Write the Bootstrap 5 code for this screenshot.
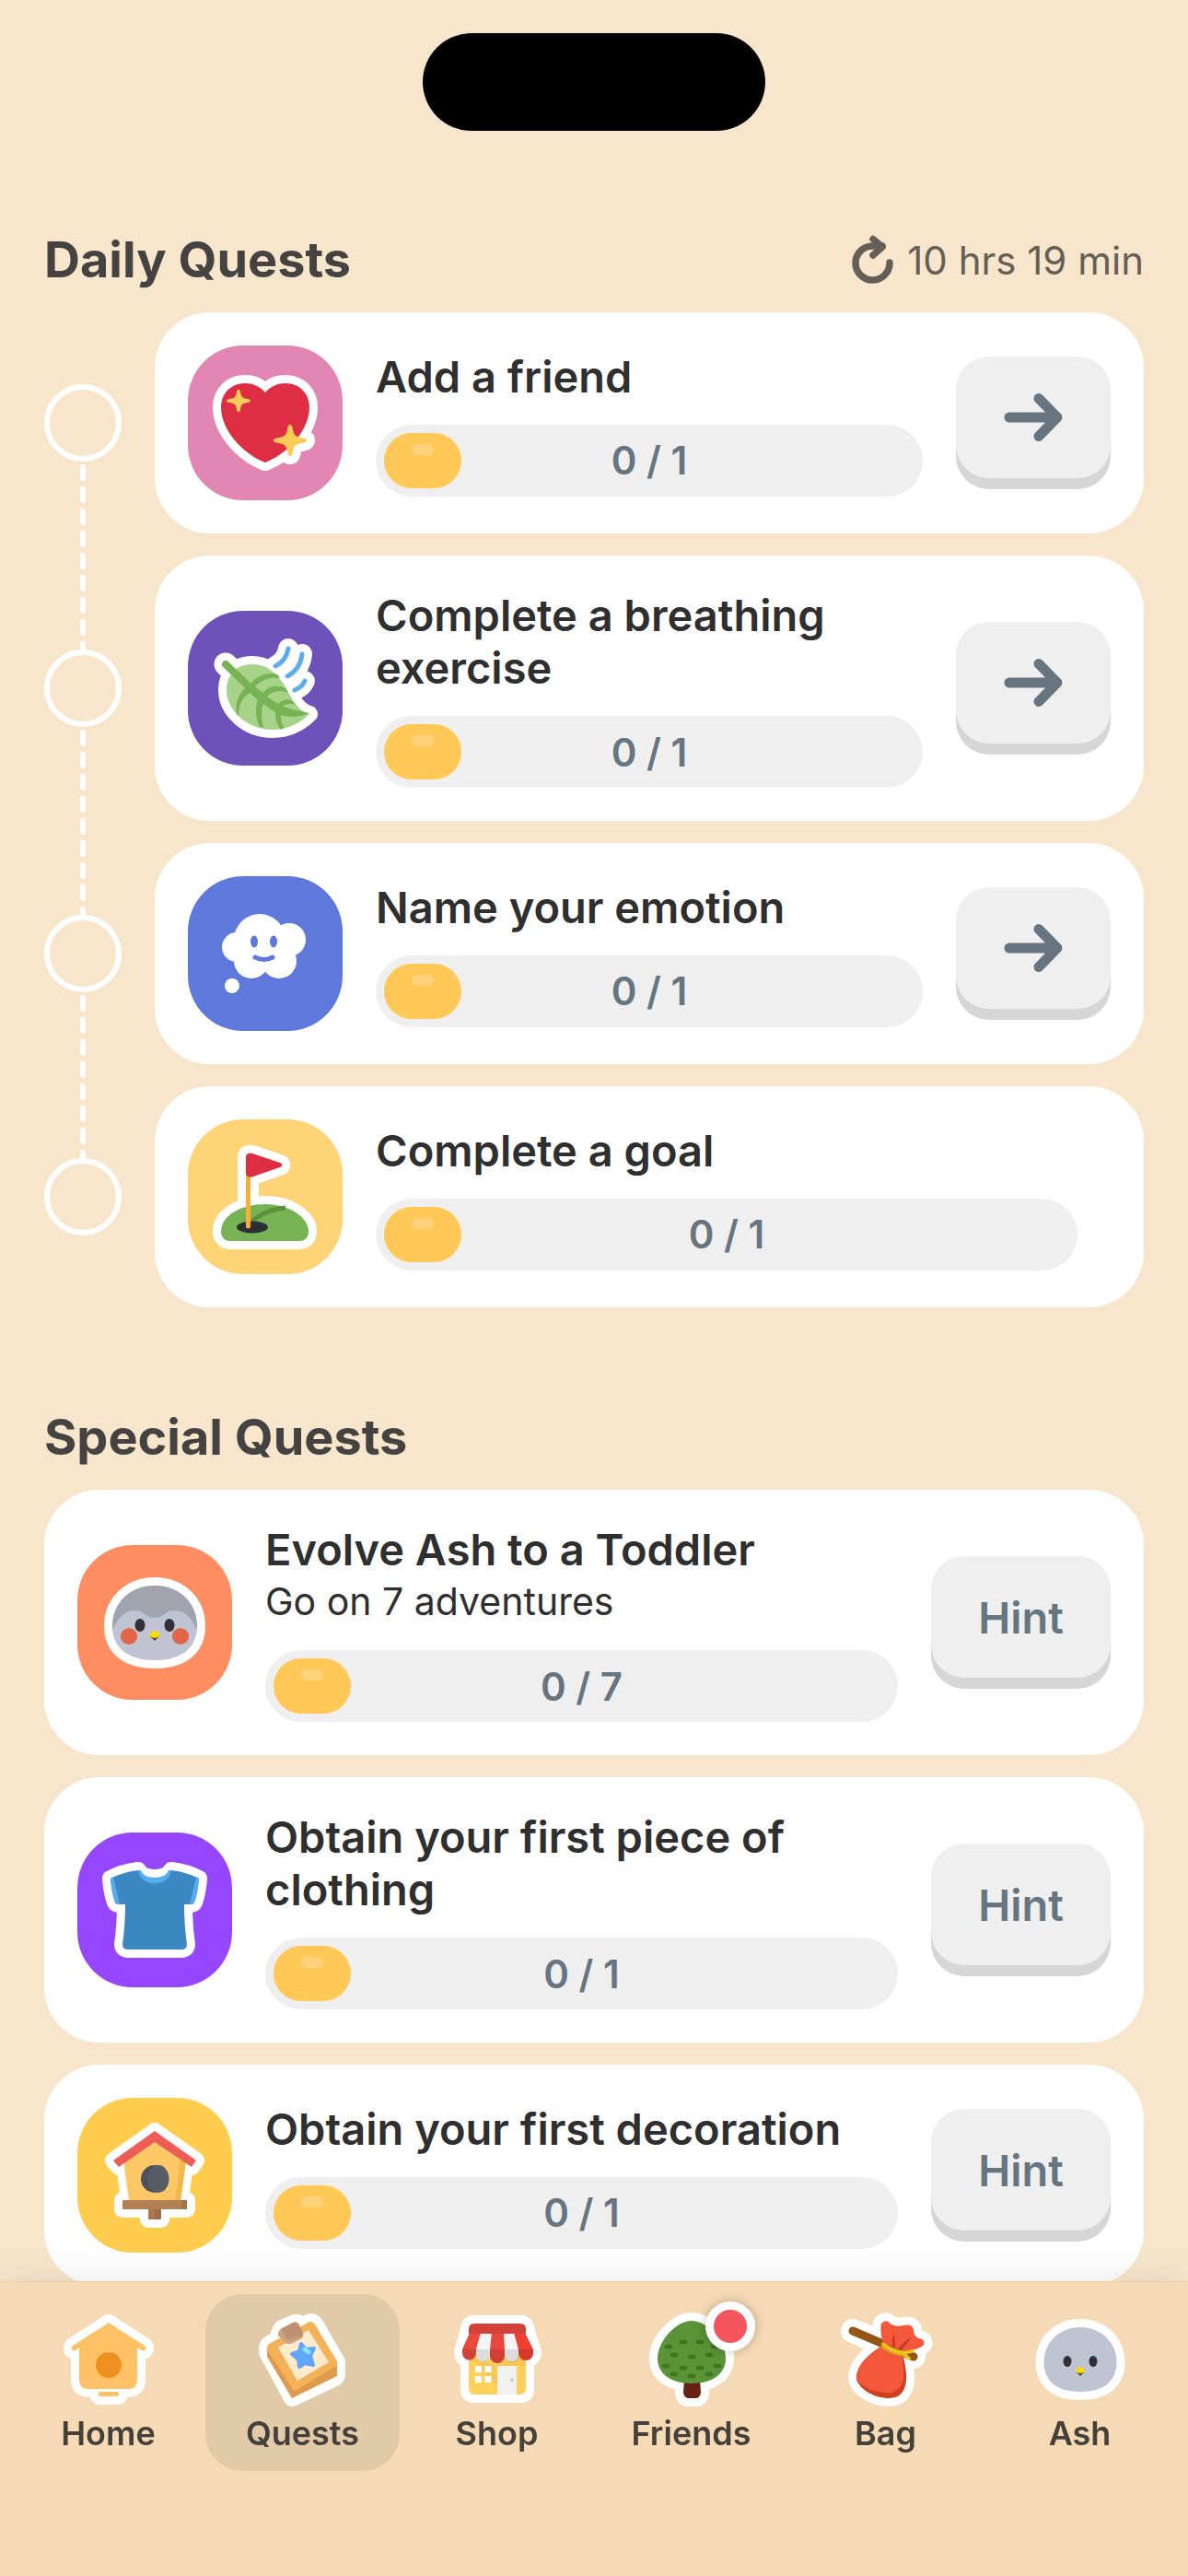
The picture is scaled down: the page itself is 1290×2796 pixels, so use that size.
<!DOCTYPE html>
<html lang="en">
<head>
  <meta charset="UTF-8">
  <meta name="viewport" content="width=device-width, initial-scale=1.0">
  <title>Quests</title>
  <link href="https://cdn.jsdelivr.net/npm/bootstrap@5.3.3/dist/css/bootstrap.min.css" rel="stylesheet">
  <script src="https://cdn.jsdelivr.net/npm/bootstrap@5.3.3/dist/js/bootstrap.bundle.min.js"></script>
  <style>
    body {
      background: #f8e6cc;
      color: #2f2f2f;
      font-family: Inter, Roboto, "Liberation Sans", sans-serif;
      font-size: 47px;
      font-weight: 600;
      line-height: 57px;
    }
    svg { display: block; flex-shrink: 0; }

    .island { width: 372px; height: 106px; margin-top: 36px; }
    .page { padding: 107px 48px 300px; }
    .section-title { font-size: 54px; font-weight: 700; line-height: 66px; color: #454341; }
    .section-head { margin-bottom: 24px; }
    .section-gap { margin-top: 108px; }
    .timer { font-size: 42px; font-weight: 400; color: #665f57; gap: 14px; }

    /* quest list */
    .quest-list { gap: 24px; }
    .quest-row { gap: 36px; }
    .quest { background: #fff; border-radius: 60px; padding: 36px; gap: 36px; }
    .quest-body { min-width: 0; }
    .quest-art { border-radius: 60px; }
    .art-pink { background: #e286b3; }
    .art-indigo { background: #6e52b9; }
    .art-blue { background: #5f78dc; }
    .art-sand { background: #ffd477; }
    .art-coral { background: #ff8d62; }
    .art-violet { background: #9746ff; }
    .art-yellow { background: #ffcc4d; }
    .quest-sub { font-size: 41px; font-weight: 400; }
    .no-action { margin-right: 36px; }

    /* dotted rail on the left, the lower part reaches over the gap between rows */
    .rail { width: 84px; }
    .rail svg { width: 84px; height: 0; flex: 1 1 0; overflow: visible; }
    .rail .rail-down { margin-bottom: -24px; flex-basis: 24px; }
    .rail line { stroke: #fff; stroke-width: 6; stroke-linecap: round; stroke-dasharray: 12 12; }
    .step { width: 84px; height: 84px; border: 6px solid #fff; flex-shrink: 0; }

    .meter { display: grid; align-items: center; height: 78px; margin-top: 24px; border-radius: 39px; background: #efefef; }
    .meter > * { grid-area: 1 / 1; }
    .meter-fill { width: 84px; height: 60px; margin-left: 9px; padding-top: 12px; border-radius: 30px; background: #ffc857; }
    .meter-fill::before { content: ""; display: block; width: 24px; height: 12px; margin: 0 auto; border-radius: 6px; background: #ffd37b; }
    .meter-text { font-size: 42px; color: #667580; text-align: center; }

    .key { width: 168px; height: 132px; margin-bottom: 12px; border: 0; border-radius: 36px; background: #efefef; box-shadow: 0 12px 0 #d6d6d6; color: #667580; flex-shrink: 0; }
    .key:hover, .key:active { background: #e8e8e8; }
    .key-hint { width: 195px; font-size: 47px; font-weight: 600; line-height: 57px; padding: 0; }

    /* bottom tabs */
    .tabs { background: #f5dab5; border-top: 1px solid #edcda1; padding: 13px 12px 114px; box-shadow: 0 -6px 36px rgba(0, 0, 0, .08); }
    .tab { flex: 1 1 0; padding: 18px 0 16px; border-radius: 40px; color: #44413b; font-size: 36px; line-height: 50px; text-decoration: none; }
    .tab.active { background: #e0caa8; }
    .dot { top: -10px; left: 69px; width: 54px; height: 54px; border: 9px solid #fff; background: #f4555f; box-shadow: 0 0 12px rgba(0, 0, 0, .25); }

    /* white sticker outline under each drawing */
    .edge { fill: #fff; stroke: #fff; stroke-width: 18; stroke-linejoin: round; stroke-linecap: round; }
    .ln { fill: none; stroke-linecap: round; stroke-linejoin: round; }
  </style>
</head>
<body>
  <div class="island bg-black rounded-pill mx-auto"></div>

  <main class="page">
    <section>
      <div class="section-head d-flex justify-content-between align-items-center">
        <h2 class="section-title mb-0">Daily Quests</h2>
        <div class="timer d-flex align-items-center">
          <svg width="46" height="54" viewBox="0 0 46 54" class="ln" stroke="#665f57" stroke-width="7.5">
            <path d="M41 30A18.500 18.500 0 1 1 22.500 12H33"/>
            <path d="M23 4.500L33 13L23 22"/>
          </svg>
          <span>10 hrs 19 min</span>
        </div>
      </div>

      <div class="quest-list d-flex flex-column">
        <div class="quest-row d-flex">
          <div class="rail d-flex flex-column">
            <svg></svg>
            <div class="step rounded-circle"></div>
            <svg class="rail-down"><line x1="42" y1="6" x2="42" y2="100%"/></svg>
          </div>
          <article class="quest d-flex align-items-center flex-grow-1">
            <svg class="quest-art art-pink" width="168" height="168" viewBox="0 0 168 168">
              <defs>
                <path id="heart" d="M84 51C78 44 70 41 62 41C47 41 36 52 36 67C36 92 60 118 84 127C108 118 132 92 132 67C132 52 121 41 106 41C98 41 90 44 84 51Z"/>
                <path id="spark" d="M0-17C2-17 2.500-15 3-12C4-6 6-4 12-3C15-2.500 18-2 18 0C18 2 15 2.500 12 3C6 4 4 6 3 12C2.500 15 2 17 0 17C-2 17-2.500 15-3 12C-4 6-6 4-12 3C-15 2.500-18 2-18 0C-18-2-15-2.500-12-3C-6-4-4-6-3-12C-2.500-15-2-17 0-17Z"/>
              </defs>
              <g class="edge"><use href="#heart"/><use href="#spark" x="111" y="103"/></g>
              <use href="#heart" fill="#dd2e44"/>
              <use href="#spark" x="111" y="103" fill="#fdcb58"/>
              <use href="#spark" transform="translate(55 60) scale(.72)" fill="#fdcb58"/>
            </svg>
            <div class="quest-body flex-grow-1">
              <div>Add a friend</div>
              <div class="meter" role="progressbar" aria-label="Add a friend" aria-valuenow="0" aria-valuemin="0" aria-valuemax="1">
                <div class="meter-fill"></div>
                <div class="meter-text">0 / 1</div>
              </div>
            </div>
            <button type="button" class="key d-flex justify-content-center align-items-center" aria-label="Go to Add a friend">
              <svg width="66" height="54" viewBox="0 0 66 54" class="ln" stroke="#667580" stroke-width="11"><path d="M7 27H59M39 6.500L59 27L39 47.500"/></svg>
            </button>
          </article>
        </div>

        <div class="quest-row d-flex">
          <div class="rail d-flex flex-column">
            <svg><line x1="42" y1="0" x2="42" y2="100%"/></svg>
            <div class="step rounded-circle"></div>
            <svg class="rail-down"><line x1="42" y1="6" x2="42" y2="100%"/></svg>
          </div>
          <article class="quest d-flex align-items-center flex-grow-1">
            <svg class="quest-art art-indigo" width="168" height="168" viewBox="0 0 168 168">
              <defs>
                <path id="leaf" d="M42 86C42 68 54 58 70 58C86 58 97 68 105 81C112 93 118 108 132 112C122 122 108 129 92 129C64 129 42 108 42 86Z"/>
                <path id="wind" d="M109 41Q107 54 95 60M124 47Q122 64 108 71M127 76Q124 83 116 86"/>
              </defs>
              <g class="edge"><use href="#leaf"/><path d="M41 58L66 82" stroke-width="25"/><use href="#wind" stroke-width="22"/></g>
              <path class="ln" d="M109 41Q107 54 95 60M124 47Q122 64 108 71M127 76Q124 83 116 86" stroke="#5dadec" stroke-width="5"/>
              <use href="#leaf" fill="#a6d388"/>
              <path class="ln" d="M41 58L66 82" stroke="#77b255" stroke-width="8"/>
              <path fill="#77b255" d="M62 84L69 78C77 70 87 66 97 69C99 70 100 73 99 73C89 71 79 76 73 82L81 89C88 81 98 80 106 84L109 89C100 85 91 87 86 93L98 101C103 96 109 95 113 98L117 102C111 100 106 101 103 104Q116 108 132 111Q116 118 101 113C101 119 102 124 105 127L101 129C96 123 95 116 95 110L82 101C79 108 80 118 82 127L78 126C73 116 73 104 76 97L67 89C58 95 55 104 55 114L53 112C51 102 54 91 62 84Z"/>
            </svg>
            <div class="quest-body flex-grow-1">
              <div>Complete a breathing exercise</div>
              <div class="meter" role="progressbar" aria-label="Complete a breathing exercise" aria-valuenow="0" aria-valuemin="0" aria-valuemax="1">
                <div class="meter-fill"></div>
                <div class="meter-text">0 / 1</div>
              </div>
            </div>
            <button type="button" class="key d-flex justify-content-center align-items-center" aria-label="Go to Complete a breathing exercise">
              <svg width="66" height="54" viewBox="0 0 66 54" class="ln" stroke="#667580" stroke-width="11"><path d="M7 27H59M39 6.500L59 27L39 47.500"/></svg>
            </button>
          </article>
        </div>

        <div class="quest-row d-flex">
          <div class="rail d-flex flex-column">
            <svg><line x1="42" y1="0" x2="42" y2="100%"/></svg>
            <div class="step rounded-circle"></div>
            <svg class="rail-down"><line x1="42" y1="6" x2="42" y2="100%"/></svg>
          </div>
          <article class="quest d-flex align-items-center flex-grow-1">
            <svg class="quest-art art-blue" width="168" height="168" viewBox="0 0 168 168">
              <g fill="#fff">
                <circle cx="78" cy="69" r="28"/><circle cx="110" cy="69" r="18"/><circle cx="53" cy="77" r="16"/>
                <circle cx="69" cy="92" r="19"/><circle cx="99" cy="92" r="19"/><circle cx="84" cy="84" r="20"/>
                <circle cx="48" cy="119" r="8"/>
              </g>
              <g fill="#5f78dc"><ellipse cx="72" cy="71" rx="4" ry="6.500"/><ellipse cx="93" cy="71" rx="4" ry="6.500"/></g>
              <path class="ln" d="M73 88Q83 93 92 88" stroke="#5f78dc" stroke-width="5"/>
            </svg>
            <div class="quest-body flex-grow-1">
              <div>Name your emotion</div>
              <div class="meter" role="progressbar" aria-label="Name your emotion" aria-valuenow="0" aria-valuemin="0" aria-valuemax="1">
                <div class="meter-fill"></div>
                <div class="meter-text">0 / 1</div>
              </div>
            </div>
            <button type="button" class="key d-flex justify-content-center align-items-center" aria-label="Go to Name your emotion">
              <svg width="66" height="54" viewBox="0 0 66 54" class="ln" stroke="#667580" stroke-width="11"><path d="M7 27H59M39 6.500L59 27L39 47.500"/></svg>
            </button>
          </article>
        </div>

        <div class="quest-row d-flex">
          <div class="rail d-flex flex-column">
            <svg><line x1="42" y1="0" x2="42" y2="100%"/></svg>
            <div class="step rounded-circle"></div>
            <svg></svg>
          </div>
          <article class="quest d-flex align-items-center flex-grow-1">
            <svg class="quest-art art-sand" width="168" height="168" viewBox="0 0 168 168">
              <defs>
                <path id="green" d="M36 122C36 104 58 92 84 92C110 92 131 106 131 122C131 128 127 132 121 132H46C40 132 36 128 36 122Z"/>
                <path id="flag" d="M63 41C63 37 66 36 70 37L100 47C103 48 103 51 100 52L71 62C66 64 63 61 63 58Z"/>
              </defs>
              <g class="edge"><use href="#green"/><use href="#flag"/><path d="M63 45H68V105H63Z"/></g>
              <use href="#green" fill="#77b255"/>
              <path fill="none" stroke="#5c913b" stroke-width="5" d="M69 112Q82 98 106 96"/>
              <ellipse cx="70" cy="117" rx="17" ry="6.500" fill="#292f33"/>
              <path class="ln" d="M65.500 50V116" stroke="#ffac33" stroke-width="5"/>
              <use href="#flag" fill="#dd2e44"/>
            </svg>
            <div class="quest-body no-action flex-grow-1">
              <div>Complete a goal</div>
              <div class="meter" role="progressbar" aria-label="Complete a goal" aria-valuenow="0" aria-valuemin="0" aria-valuemax="1">
                <div class="meter-fill"></div>
                <div class="meter-text">0 / 1</div>
              </div>
            </div>
          </article>
        </div>
      </div>
    </section>

    <section class="section-gap">
      <div class="section-head">
        <h2 class="section-title mb-0">Special Quests</h2>
      </div>

      <div class="quest-list d-flex flex-column">
        <article class="quest d-flex align-items-center">
          <svg class="quest-art art-coral" width="168" height="168" viewBox="0 0 168 168">
            <defs>
              <clipPath id="chick"><path d="M38 88C38 62 58 44 84 44C110 44 130 62 130 88C130 112 113 125 84 125C55 125 38 112 38 88Z"/></clipPath>
            </defs>
            <path class="edge" d="M38 88C38 62 58 44 84 44C110 44 130 62 130 88C130 112 113 125 84 125C55 125 38 112 38 88Z"/>
            <g clip-path="url(#chick)">
              <path fill="#bfc3d2" d="M30 40H140V130H30Z"/>
              <path fill="#a1a4af" d="M30 35H138V96L130 93C125 80 117 71 106 71C95 71 94 79 84 79C74 79 73 71 62 71C51 71 43 80 38 93L30 96Z"/>
            </g>
            <g fill="#e2654a"><circle cx="56" cy="99" r="9"/><circle cx="112" cy="99" r="9"/></g>
            <g fill="#352f37"><ellipse cx="68" cy="87" rx="5.500" ry="7"/><ellipse cx="100" cy="87" rx="5.500" ry="7"/></g>
            <path fill="#4d4626" d="M79 99L84 104L89 99Z"/>
            <path fill="#fbdc02" d="M84 93Q87 93 90 98Q84 104 78 98Q81 93 84 93Z"/>
          </svg>
          <div class="quest-body flex-grow-1">
            <div>Evolve Ash to a Toddler</div>
            <div class="quest-sub">Go on 7 adventures</div>
            <div class="meter" role="progressbar" aria-label="Evolve Ash to a Toddler" aria-valuenow="0" aria-valuemin="0" aria-valuemax="7">
              <div class="meter-fill"></div>
              <div class="meter-text">0 / 7</div>
            </div>
          </div>
          <button type="button" class="key key-hint">Hint</button>
        </article>

        <article class="quest d-flex align-items-center">
          <svg class="quest-art art-violet" width="168" height="168" viewBox="0 0 168 168">
            <defs>
              <path id="shirt" d="M66 41Q49 43 36 50Q37 64 41 76Q42 78 46 78H52Q52 101 49 121Q49 127 55 127H113Q119 127 119 121Q116 101 116 78H122Q126 78 127 76Q131 64 132 50Q119 43 102 41Q97 49 84 49Q71 49 66 41Z"/>
            </defs>
            <use class="edge" href="#shirt"/>
            <use href="#shirt" fill="#3b88c3"/>
            <path fill="#55acee" d="M66 41C68 60 100 60 102 41L99 41Q96 49 84 49Q72 49 69 41ZM36 50L39 48L46 78Q42 78 41 76Q37 64 36 50ZM132 50L129 48L122 78Q126 78 127 76Q131 64 132 50Z"/>
          </svg>
          <div class="quest-body flex-grow-1">
            <div>Obtain your first piece of clothing</div>
            <div class="meter" role="progressbar" aria-label="Obtain your first piece of clothing" aria-valuenow="0" aria-valuemin="0" aria-valuemax="1">
              <div class="meter-fill"></div>
              <div class="meter-text">0 / 1</div>
            </div>
          </div>
          <button type="button" class="key key-hint">Hint</button>
        </article>

        <article class="quest d-flex align-items-center">
          <svg class="quest-art art-yellow" width="168" height="168" viewBox="0 0 168 168">
            <path class="edge" d="M84 36L129 68L124 75L117 71L112 111H119V121H91V132H77V121H49V111H56L51 71L45 75L39 68Z"/>
            <path fill="#ffc866" d="M84 44L118 68L112 112H56L50 68Z"/>
            <path fill="#f4b848" d="M112 66L118 69L112 112H106Z"/>
            <path fill="#ed5c57" d="M84 36L129 68L124 75L84 48L45 75L39 68Z"/>
            <circle cx="84" cy="88" r="15" fill="#4d525e"/>
            <ellipse cx="88" cy="88" rx="11.500" ry="15" fill="#575c67"/>
            <rect x="77" y="119" width="14" height="13" rx="1" fill="#a06a47"/>
            <rect x="77" y="119" width="7" height="13" rx="1" fill="#ad764e"/>
            <rect x="49" y="111" width="70" height="10" rx="1" fill="#b27f52"/>
            <rect x="113" y="111" width="6" height="10" rx="1" fill="#a5714b"/>
          </svg>
          <div class="quest-body flex-grow-1">
            <div>Obtain your first decoration</div>
            <div class="meter" role="progressbar" aria-label="Obtain your first decoration" aria-valuenow="0" aria-valuemin="0" aria-valuemax="1">
              <div class="meter-fill"></div>
              <div class="meter-text">0 / 1</div>
            </div>
          </div>
          <button type="button" class="key key-hint">Hint</button>
        </article>
      </div>
    </section>
  </main>

  <nav class="tabs fixed-bottom d-flex">
    <a href="#" class="tab d-flex flex-column align-items-center">
      <svg width="108" height="108" viewBox="0 0 108 108">
        <defs>
          <path id="nest" d="M54 13Q55 13 57 15L93 38C96 41 93 45 90 43L85 40V75Q85 85 75 85H32Q22 85 22 75V40L18 43C15 45 12 41 15 38L51 15Q53 13 54 13Z"/>
        </defs>
        <g class="edge"><use href="#nest"/><rect x="43" y="85" width="22" height="8"/></g>
        <use href="#nest" fill="#ffc166"/>
        <circle cx="54" cy="59" r="14" fill="#ee9020"/>
        <rect x="43" y="88" width="22" height="5" rx="2" fill="#ffc166"/>
      </svg>
      Home
    </a>
    <a href="#" class="tab active d-flex flex-column align-items-center" aria-current="page">
      <svg width="108" height="108" viewBox="0 0 108 108">
        <path class="edge" d="M15 45Q14 38 19 35L27 31Q27 25 31 19L45 13Q50 12 53 17L62 12Q66 12 68 16L91 56V70L89 73L42 95Z"/>
        <path fill="#df9a4d" d="M15 42L15 50L42 95L91 71V58L45 84Z"/>
        <path fill="#f3b158" d="M19 35L61 12Q65 12 67 15L91 55Q92 58 90 60L49 85Q44 88 42 84L15 42Q14 38 19 35Z"/>
        <path fill="#ffebcb" d="M27 40L60 21L82 56L48 76Z"/>
        <path fill="#cba386" d="M27 27Q26 22 31 19L43 13Q48 11 50 16L54 25Q55 29 51 31L41 36Q37 37 34 34Z"/>
        <path fill="#bf9171" d="M31 20L43 13Q48 11 50 16L54 24Q54 27 51 28L41 32Q37 32 35 29Z"/>
        <path fill="#60a8fe" stroke="#60a8fe" stroke-width="4" stroke-linejoin="round" d="M52 36L57 42L66 41L62 49L65 59L56 57L50 61L49 53L42 47L50 44Z"/>
        <path class="ln" d="M56 42L60 45" stroke="#8ae4ff" stroke-width="5"/>
      </svg>
      Quests
    </a>
    <a href="#" class="tab d-flex flex-column align-items-center">
      <svg width="108" height="108" viewBox="0 0 108 108">
        <path class="edge" d="M28 14H80Q85 14 85 20L93 45Q93 52 85 53V86Q85 91 80 91H28Q23 91 23 86V53Q16 52 16 45L23 20Q23 14 28 14Z"/>
        <rect x="23" y="38" width="62" height="53" rx="6" fill="#ffd15c"/>
        <path fill="#f3bd4b" d="M23 50L54 82V42H85V60H54Z" opacity=".5"/>
        <path fill="#f1f1f1" d="M54 60H75V91H54Z"/>
        <circle cx="70" cy="75" r="2" fill="#c9c9c9"/>
        <path fill="#fff" d="M30 60H37V67H30ZM40.500 60H47.500V67H40.500ZM30 71H37V78H30ZM40.500 71H47.500V78H40.500Z"/>
        <path fill="#e94b3f" d="M24 24H39L31 42V46A7.500 7.500 0 0 1 16 46V42Z"/>
        <path fill="#f5f5f5" d="M38 24H48L46 42V48A7.500 7.500 0 0 1 31 48V42L36 24Z"/>
        <path fill="#f5f5f5" d="M60 24H72L77 42V48A7.500 7.500 0 0 1 62 48V42Z"/>
        <path fill="#e8473d" d="M48 24H61L62 42V49A8 8 0 0 1 46 49V42Z"/>
        <path fill="#ed4030" d="M72 24H84L93 42V46A7.500 7.500 0 0 1 77 46V42Z"/>
        <path fill="#000" opacity=".1" d="M16 42H93V46A7.500 7.500 0 0 1 78 48A7.500 7.500 0 0 1 62 49A8 8 0 0 1 46 49A7.500 7.500 0 0 1 31 48A7.500 7.500 0 0 1 16 46Z"/>
        <path fill="#d2423a" d="M23 25V20Q23 14 29 14H79Q85 14 85 20V25Z"/>
      </svg>
      Shop
    </a>
    <a href="#" class="tab d-flex flex-column align-items-center">
      <span class="position-relative">
        <svg width="108" height="108" viewBox="0 0 108 108">
          <defs><path id="crown" d="M54 11C38 11 17 32 17 52C17 68 31 79 54 79C77 79 91 68 91 52C91 32 70 11 54 11Z"/></defs>
          <g class="edge"><use href="#crown"/><path d="M46 76H63L64 90Q63 95 59 95H50Q46 95 45 90Z"/></g>
          <path fill="#672012" d="M46 74H63L64 89Q63 95 58 95H51Q46 95 45 89Z"/>
          <use href="#crown" fill="#5b9339"/>
          <g fill="#3f751d">
            <ellipse cx="45" cy="34" rx="4.500" ry="2.500"/><ellipse cx="63" cy="34" rx="4.500" ry="2.500"/>
            <ellipse cx="29" cy="39" rx="4.500" ry="2.500"/><ellipse cx="79" cy="39" rx="4.500" ry="2.500"/>
            <ellipse cx="35" cy="48" rx="4.500" ry="2.500"/><ellipse cx="54" cy="50" rx="4.500" ry="2.500"/><ellipse cx="73" cy="48" rx="4.500" ry="2.500"/>
            <ellipse cx="26" cy="60" rx="4.500" ry="2.500"/><ellipse cx="45" cy="62" rx="4.500" ry="2.500"/><ellipse cx="63" cy="62" rx="4.500" ry="2.500"/><ellipse cx="82" cy="60" rx="4.500" ry="2.500"/>
            <ellipse cx="35" cy="69" rx="4.500" ry="2.500"/><ellipse cx="54" cy="71" rx="4.500" ry="2.500"/><ellipse cx="73" cy="69" rx="4.500" ry="2.500"/>
          </g>
        </svg>
        <span class="dot position-absolute rounded-circle"></span>
      </span>
      Friends
    </a>
    <a href="#" class="tab d-flex flex-column align-items-center">
      <svg width="108" height="108" viewBox="0 0 108 108">
        <defs>
          <path id="sack" d="M50 38C36 47 22 58 22 74C24 84 40 95 57 95C72 95 77 84 76 68Q75 57 72 47Z"/>
          <path id="ruffle" d="M51 35Q47 22 49 14Q54 8 60 15Q66 18 73 16Q83 14 84 21Q84 27 89 30Q97 31 95 37Q90 43 72 44Z"/>
        </defs>
        <g class="edge"><use href="#sack"/><use href="#ruffle"/><path d="M18 22L84 50" stroke-width="26"/></g>
        <path class="ln" d="M18 22L84 50" stroke="#955513" stroke-width="9"/>
        <use href="#sack" fill="#d03f20"/>
        <path fill="#f4583a" d="M50 38C36 47 22 58 22 74C26 82 42 90 57 89C70 88 74 78 73 66Q73 56 71 47Z"/>
        <use href="#ruffle" fill="#f4583a"/>
        <path fill="#c53d22" d="M61 39Q60 30 63 25Q64 32 64 40ZM67 42Q72 34 82 29Q76 37 71 43Z"/>
        <path fill="none" stroke="#d9a818" stroke-width="6" d="M50 37Q60 45 74 47"/>
        <path class="ln" stroke="#efc220" stroke-width="3.500" d="M51 36Q60 44 73 46L83 44M74 47L79 52"/>
      </svg>
      Bag
    </a>
    <a href="#" class="tab d-flex flex-column align-items-center">
      <svg width="108" height="108" viewBox="0 0 108 108">
        <defs><path id="ash" d="M14.500 56C14.500 34 32 18 54 18C76 18 93.500 34 93.500 56C93.500 77 79 88 54 88C29 88 14.500 77 14.500 56Z"/></defs>
        <use class="edge" href="#ash"/>
        <use href="#ash" fill="#bfc3d2"/>
        <g fill="#352f37"><ellipse cx="40" cy="55" rx="4.500" ry="6"/><ellipse cx="68" cy="55" rx="4.500" ry="6"/></g>
        <path fill="#4d4626" d="M50 67L54 71L58 67Z"/>
        <path fill="#fbdc02" d="M54 61Q57 61 59 66Q54 70 49 66Q51 61 54 61Z"/>
      </svg>
      Ash
    </a>
  </nav>
</body>
</html>
